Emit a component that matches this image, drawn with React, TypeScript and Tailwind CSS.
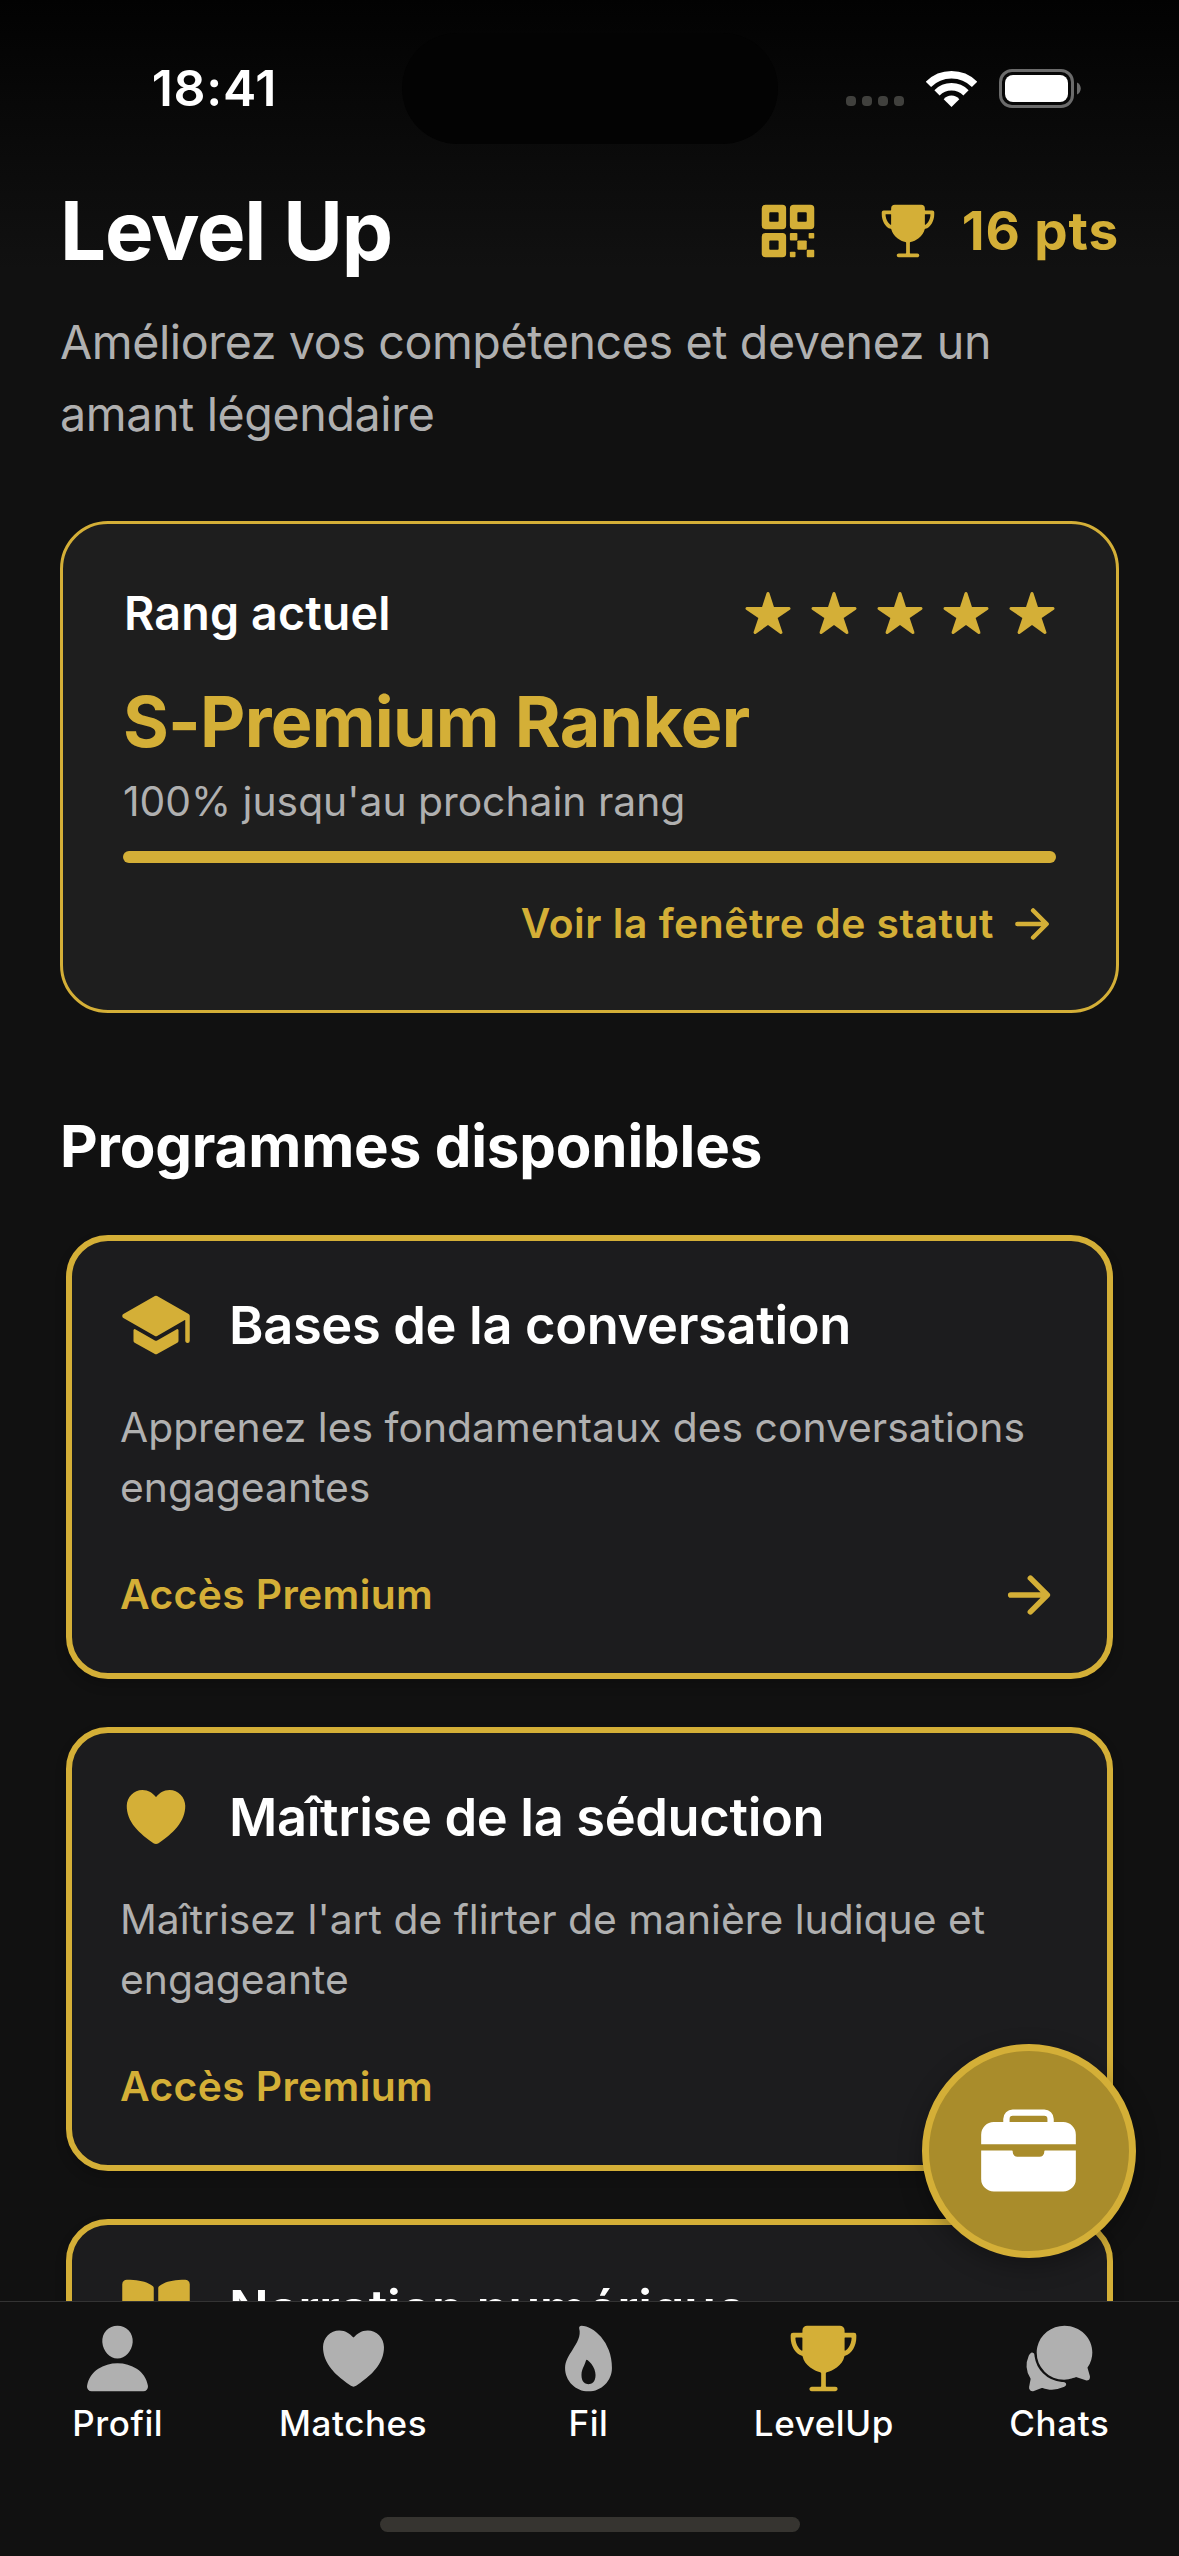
import React from 'react';
import {
  IoArrowForward,
  IoBook,
  IoBriefcase,
  IoChatbubbles,
  IoFlame,
  IoHeart,
  IoPerson,
  IoQrCode,
  IoSchool,
  IoStar,
  IoTrophy,
} from 'react-icons/io5';

const StatusBar = () => (
  <div className="h-[177px] shrink-0 flex justify-between pt-[33px]">
    <div className="w-[402px] h-[111px] flex items-center justify-center pl-[27px]">
      <span className="text-[50px] font-semibold text-white tracking-[0.7px]">18:41</span>
    </div>
    <div className="w-[376px] h-[111px] rounded-full bg-[#030303]" />
    <div className="w-[401px] h-[111px] flex items-center pl-[68px]">
      <div className="flex gap-[6px] pt-[25px]">
        {[0, 1, 2, 3].map((i) => (
          <div key={i} className="w-[10px] h-[10px] rounded-[4px] bg-[#40403d]" />
        ))}
      </div>
      <svg className="ml-[22px] w-[51px] h-[37px]" viewBox="0 0 51 37" fill="none">
        <path d="M2.4 14.4A32.5 32.5 0 0 1 48.6 14.4" stroke="#fff" strokeWidth="7.6" />
        <path d="M11 22.8A20.5 20.5 0 0 1 40 22.8" stroke="#fff" strokeWidth="7.4" />
        <path d="M25.5 37L17.7 29.2Q20.8 25.5 25.5 25.5T33.3 29.2Z" fill="#fff" />
      </svg>
      <svg className="ml-[22px] w-[82px] h-[39px]" viewBox="0 0 82 39">
        <rect x="1.5" y="1.5" width="72" height="36" rx="11.5" fill="none" stroke="#6b6b6b" strokeWidth="3" />
        <rect x="6" y="6" width="63" height="27" rx="8" fill="#fff" />
        <path d="M78 13.5c5 2 5 10 0 12z" fill="#6b6b6b" />
      </svg>
    </div>
  </div>
);

const RankCard = () => (
  <div className="mt-[71px] h-[492px] rounded-[48px] border-[3px] border-[#d4af37] bg-[#1e1e1e] px-[60px] pt-[59px]">
    <div className="h-[60px] flex items-center justify-between">
      <span className="pl-px pt-[2px] text-[46.6px] font-semibold text-white tracking-[0.15px]">Rang actuel</span>
      <div className="flex gap-[18px]">
        {[0, 1, 2, 3, 4].map((i) => (
          <IoStar key={i} className="w-12 h-12 text-[#d4af37]" />
        ))}
      </div>
    </div>
    <h2 className="mt-[36px] leading-[86px] text-[70px] font-bold text-[#d4af37] tracking-[-0.75px]">S-Premium Ranker</h2>
    <p className="mt-[11px] leading-[50px] text-[40.8px] text-[#b0b0b0]">100% jusqu'au prochain rang</p>
    <div className="mt-[25px] h-[12px] rounded-full bg-[#d4af37]" />
    <div className="mt-[36px] h-[50px] flex items-center justify-end gap-[14px] text-[#d4af37]">
      <span className="text-[40.8px] font-semibold tracking-[0.53px]">Voir la fenêtre de statut</span>
      <IoArrowForward className="w-12 h-12" />
    </div>
  </div>
);

const programs = [
  {
    Icon: IoSchool,
    title: 'Bases de la conversation',
    lines: ['Apprenez les fondamentaux des conversations', 'engageantes'],
  },
  {
    Icon: IoHeart,
    title: 'Maîtrise de la séduction',
    lines: ["Maîtrisez l'art de flirter de manière ludique et", 'engageante'],
  },
  {
    Icon: IoBook,
    title: 'Narration numérique',
    lines: [],
  },
];

const tabs = [
  { Icon: IoPerson, label: 'Profil', active: false },
  { Icon: IoHeart, label: 'Matches', active: false },
  { Icon: IoFlame, label: 'Fil', active: false },
  { Icon: IoTrophy, label: 'LevelUp', active: true },
  { Icon: IoChatbubbles, label: 'Chats', active: false },
];

const App = () => {
  return (
    <div className="relative w-[1179px] h-[2556px] flex flex-col overflow-hidden bg-[#111] bg-[linear-gradient(to_bottom,#020202_0px,#0a0a0a_140px,#111_270px)] font-[Inter,sans-serif]">
      <StatusBar />

      <main className="flex-1 min-h-0 overflow-hidden px-[60px]">
        {/* Header */}
        <div className="mt-[3px] h-[102px] flex items-center justify-between">
          <h1 className="text-[81.5px] font-bold text-white tracking-[-1.2px] leading-[102px]">Level Up</h1>
          <div className="flex items-center text-[#d4af37]">
            <IoQrCode className="w-[60px] h-[60px]" />
            <IoTrophy className="ml-[60px] w-[60px] h-[60px]" />
            <span className="ml-[24px] pt-[2px] text-[53px] font-bold tracking-[0.9px]">16 pts</span>
          </div>
        </div>
        <p className="mt-[24px] text-[46.6px] leading-[72px] text-[#b0b0b0] tracking-[-0.39px]">
          Améliorez vos compétences et devenez un
          <br />
          amant légendaire
        </p>

        <RankCard />

        {/* Programs */}
        <h2 className="mt-[97px] text-[58.2px] leading-[72px] font-bold text-white tracking-[-0.15px]">
          Programmes disponibles
        </h2>
        <div className="mt-[53px] px-[6px] flex flex-col gap-12">
          {programs.map(({ Icon, title, lines }) => (
            <div
              key={title}
              className="h-[444px] shrink-0 rounded-[42px] border-[6px] border-[#d4af37] bg-[#1c1c1e] p-12 shadow-[0_6px_12px_rgba(0,0,0,0.2)]"
            >
              <div className="h-[72px] flex items-center gap-[37px]">
                <Icon className="w-[72px] h-[72px] text-[#d4af37]" />
                <span className="text-[52.4px] font-semibold text-white tracking-[-0.35px]">{title}</span>
              </div>
              <div className="mt-9 h-[120px] text-[40.8px] leading-[60px] text-[#b0b0b0] whitespace-nowrap">
                {lines.map((line) => (
                  <p key={line}>{line}</p>
                ))}
              </div>
              {lines.length > 0 && (
                <div className="mt-12 h-[60px] flex items-center justify-between text-[#d4af37]">
                  <span className="text-[40.8px] font-semibold tracking-[0.38px]">Accès Premium</span>
                  <IoArrowForward className="w-[60px] h-[60px]" />
                </div>
              )}
            </div>
          ))}
        </div>
      </main>

      {/* Tab bar */}
      <nav className="h-[255px] shrink-0 border-t border-[#333] bg-[#111] flex flex-col items-center">
        <div className="w-full h-[215px] flex pt-[19px] pr-[2px]">
          {tabs.map(({ Icon, label, active }) => (
            <div key={label} className="flex-1 flex flex-col items-center">
              <Icon className={active ? 'w-[75px] h-[75px] text-[#d4af37]' : 'w-[75px] h-[75px] text-[#b0b0b0]'} />
              <span className="mt-[5px] text-[35px] leading-[44px] font-medium text-white tracking-[0.6px]">{label}</span>
            </div>
          ))}
        </div>
        <div className="w-[420px] h-[15px] rounded-full bg-[#363430]" />
      </nav>

      {/* Floating action button */}
      <button className="absolute left-[922px] top-[2044px] w-[214px] h-[214px] rounded-full border-[7px] border-[#d4af37] bg-[#a98c2b] flex items-center justify-center pr-[2px] pb-[2px] shadow-[0_8px_24px_rgba(0,0,0,0.3)]">
        <IoBriefcase className="w-[101px] h-[101px] text-white" />
      </button>
    </div>
  );
};

export default App;
